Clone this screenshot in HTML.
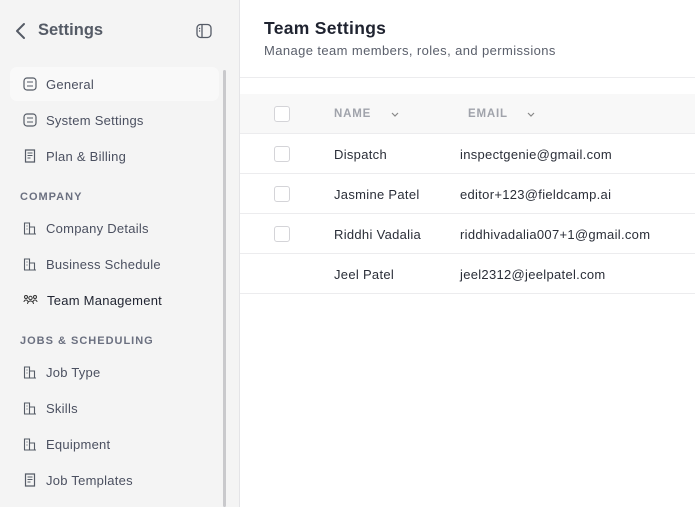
<!DOCTYPE html>
<html><head><style>
*{box-sizing:border-box;margin:0;padding:0}
body{width:695px;height:507px;overflow:hidden;font-family:"Liberation Sans",sans-serif;background:#fff;position:relative}
.side{position:absolute;left:0;top:0;width:240px;height:507px;background:#f4f4f4;border-right:1px solid #e4e4e7}
.title{position:absolute;left:38px;top:21px;font-size:16.5px;font-weight:bold;color:#555b66}
.back{position:absolute;left:14px;top:22px}
.tog{position:absolute;left:196px;top:23px}
.sb{position:absolute;left:223px;top:70px;width:3px;height:437px;background:#c9c9cc;border-radius:2px}
.item{position:absolute;left:10px;width:209px;height:34px;border-radius:7px;font-size:13px;letter-spacing:.25px;color:#4b5060;display:flex;align-items:center;padding-left:13px}
.item svg{margin-right:9px;flex:none}
.item.act{background:#f9f9f9}
.item.bold{color:#1f2330}
.sec{position:absolute;left:20px;font-size:11px;font-weight:bold;letter-spacing:1px;color:#6b7080}
.main{position:absolute;left:240px;top:0;right:0}
h1{position:absolute;left:24px;top:18px;font-size:17.5px;letter-spacing:.3px;color:#1f2330}
.sub{position:absolute;left:24px;top:43px;font-size:13px;letter-spacing:.4px;color:#5a5f6b;white-space:nowrap}
.hr{position:absolute;left:0;width:455px;height:1px;background:#ececee}
.th{position:absolute;left:0;top:94px;width:455px;height:40px;background:#f8f8f8;border-bottom:1px solid #ececee}
.cb{position:absolute;left:34px;width:16px;height:16px;border:1px solid #d4d4d8;border-radius:3px;background:#fff}
.t{position:absolute;font-size:13px;letter-spacing:.3px;color:#2a2e38;white-space:nowrap}
.hd{position:absolute;font-size:11.5px;font-weight:bold;color:#a0a3ab;letter-spacing:.8px}
</style></head><body>
<div class="side">
<svg class="back" width="14" height="18" viewBox="0 0 14 18"><path d="M10 2L3 9l7 7" fill="none" stroke="#555b66" stroke-width="2" stroke-linecap="round" stroke-linejoin="round"/></svg>
<div class="title">Settings</div>
<svg class="tog" width="16" height="16" viewBox="0 0 16 16"><rect x="1" y="1.5" width="14" height="13" rx="3.5" fill="none" stroke="#555b66" stroke-width="1.3"/><line x1="6" y1="2" x2="6" y2="14" stroke="#555b66" stroke-width="1.3"/><circle cx="3.6" cy="5.5" r=".7" fill="#555b66"/><circle cx="3.6" cy="8" r=".7" fill="#555b66"/></svg>
<div class="sb"></div>
<div class="item act" style="top:67px"><svg width="14" height="14" viewBox="0 0 14 14"><rect x="1" y="1" width="12" height="12" rx="3" fill="none" stroke="#555b66" stroke-width="1.2"/><path d="M4 5h6M4 9h6" stroke="#555b66" stroke-width="1.1"/></svg>General</div>
<div class="item" style="top:103px"><svg width="14" height="14" viewBox="0 0 14 14"><rect x="1" y="1" width="12" height="12" rx="3" fill="none" stroke="#555b66" stroke-width="1.2"/><path d="M4 5h6M4 9h6" stroke="#555b66" stroke-width="1.1"/></svg>System Settings</div>
<div class="item" style="top:139px"><svg width="14" height="14" viewBox="0 0 14 14"><path d="M2.5 1h9v12h-9z" fill="none" stroke="#555b66" stroke-width="1.2"/><path d="M4.5 4h5M4.5 6.5h5M4.5 9h3" stroke="#555b66" stroke-width="1"/></svg>Plan &amp; Billing</div>
<div class="sec" style="top:191px">COMPANY</div>
<div class="item" style="top:211px"><svg width="14" height="14" viewBox="0 0 14 14"><path d="M1.5 13V2h5v11M6.5 6h5v7M1 13h12M3.5 5h1M3.5 8h1" fill="none" stroke="#555b66" stroke-width="1.1"/></svg>Company Details</div>
<div class="item" style="top:247px"><svg width="14" height="14" viewBox="0 0 14 14"><path d="M1.5 13V2h5v11M6.5 6h5v7M1 13h12M3.5 5h1M3.5 8h1" fill="none" stroke="#555b66" stroke-width="1.1"/></svg>Business Schedule</div>
<div class="item bold" style="top:283px"><svg width="15" height="14" viewBox="0 0 15 14"><g fill="none" stroke="#333" stroke-width="1"><circle cx="3" cy="4" r="1.5"/><circle cx="7.5" cy="5" r="1.7"/><circle cx="12" cy="4" r="1.5"/><path d="M1 9a2 2 0 014 0M4.5 11a3 3 0 016 0M10 9a2 2 0 014 0"/></g></svg>Team Management</div>
<div class="sec" style="top:335px">JOBS &amp; SCHEDULING</div>
<div class="item" style="top:355px"><svg width="14" height="14" viewBox="0 0 14 14"><path d="M1.5 13V2h5v11M6.5 6h5v7M1 13h12M3.5 5h1M3.5 8h1" fill="none" stroke="#555b66" stroke-width="1.1"/></svg>Job Type</div>
<div class="item" style="top:391px"><svg width="14" height="14" viewBox="0 0 14 14"><path d="M1.5 13V2h5v11M6.5 6h5v7M1 13h12M3.5 5h1M3.5 8h1" fill="none" stroke="#555b66" stroke-width="1.1"/></svg>Skills</div>
<div class="item" style="top:427px"><svg width="14" height="14" viewBox="0 0 14 14"><path d="M1.5 13V2h5v11M6.5 6h5v7M1 13h12M3.5 5h1M3.5 8h1" fill="none" stroke="#555b66" stroke-width="1.1"/></svg>Equipment</div>
<div class="item" style="top:463px"><svg width="14" height="14" viewBox="0 0 14 14"><path d="M2.5 1h9v12h-9z" fill="none" stroke="#555b66" stroke-width="1.2"/><path d="M4.5 4h5M4.5 6.5h5M4.5 9h3" stroke="#555b66" stroke-width="1"/></svg>Job Templates</div>
</div>
<div class="main">
<h1>Team Settings</h1>
<div class="sub">Manage team members, roles, and permissions</div>
<div class="hr" style="top:77px"></div>
<div class="th"></div>
<div class="cb" style="top:106px"></div>
<div class="hd" style="left:94px;top:108px">NAME</div>
<svg style="position:absolute;left:151px;top:112px" width="8" height="6"><path d="M1 1l3 3 3-3" fill="none" stroke="#888" stroke-width="1.2"/></svg>
<div class="hd" style="left:228px;top:108px">EMAIL</div>
<svg style="position:absolute;left:287px;top:112px" width="8" height="6"><path d="M1 1l3 3 3-3" fill="none" stroke="#888" stroke-width="1.2"/></svg>
<div class="cb" style="top:146px"></div><div class="t" style="left:94px;top:147px">Dispatch</div><div class="t" style="left:220px;top:147px">inspectgenie@gmail.com</div>
<div class="hr" style="top:173px"></div>
<div class="cb" style="top:186px"></div><div class="t" style="left:94px;top:187px">Jasmine Patel</div><div class="t" style="left:220px;top:187px">editor+123@fieldcamp.ai</div>
<div class="hr" style="top:213px"></div>
<div class="cb" style="top:226px"></div><div class="t" style="left:94px;top:227px">Riddhi Vadalia</div><div class="t" style="left:220px;top:227px">riddhivadalia007+1@gmail.com</div>
<div class="hr" style="top:253px"></div>
<div class="t" style="left:94px;top:267px">Jeel Patel</div><div class="t" style="left:220px;top:267px">jeel2312@jeelpatel.com</div>
<div class="hr" style="top:293px"></div>
</div>
</body></html>
